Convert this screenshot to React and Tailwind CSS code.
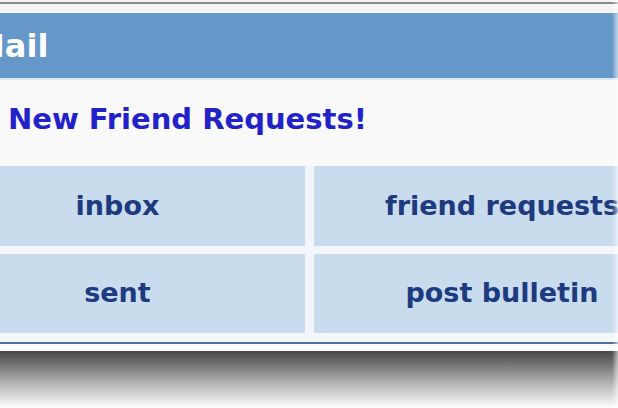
import React from 'react';

const cells = ['inbox', 'friend requests', 'sent', 'post bulletin'];

const MailBox = () => {
  return (
    <div className="w-[618px] h-[408px] overflow-hidden bg-white relative font-['DejaVu_Sans',Verdana,sans-serif]">
      {/* top edge of the page above the box */}
      <div className="h-[13px] bg-[#f4f4f4] pt-[2px]">
        <div className="h-[2px] bg-[#8a8a8a]"></div>
      </div>

      <div className="ml-[-70px] w-[760px]">
        {/* header bar */}
        <div className="h-[67px] bg-[#6598c9] flex items-center pl-[43px] border-b-2 border-[#dce8f3]">
          <span className="text-white font-bold text-[32px] leading-none">Mail</span>
        </div>

        {/* body */}
        <div className="bg-[#f9f9f9] pt-[22px] pb-[30px] pl-[78px]">
          <span className="text-[#2222c8] font-bold text-[29px] leading-[34px] block">New Friend Requests!</span>
        </div>

        <div className="grid grid-cols-[375px_376px] gap-x-[9px] gap-y-[8px] bg-[#f2f6fa]">
          {cells.map((c, i) => (
            <div
              key={c}
              className={`bg-[#c9dcee] flex items-center justify-center text-[#1d3b7e] font-bold text-[27px] ${i < 2 ? 'h-[80px]' : 'h-[79px]'}`}
            >
              {c}
            </div>
          ))}
        </div>

        <div className="h-[9px] bg-[#f4f7fa]"></div>
        <div className="h-[2px] bg-[#4f6f9f]"></div>
        <div className="h-[7px] bg-[#fbfbfb]"></div>
      </div>

      {/* drop shadow under the box */}
      <div className="h-[57px] bg-linear-to-b from-[#484848] via-[#a8a8a8] to-white"></div>

      {/* right edge fade */}
      <div className="absolute top-0 right-0 w-[6px] h-full bg-linear-to-r from-transparent to-white/60"></div>
    </div>
  );
};

export default MailBox;
